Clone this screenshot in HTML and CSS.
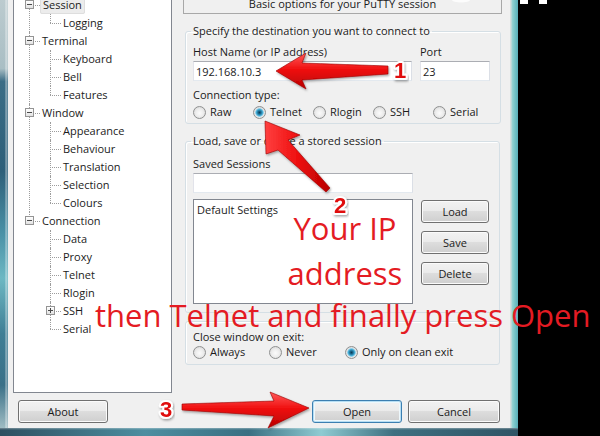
FILE: index.html
```html
<!DOCTYPE html>
<html lang="en">

<head>
  <meta charset="UTF-8">
  <meta name="viewport" content="width=device-width, initial-scale=1.0">
  <title>PuTTY Configuration</title>
  <link rel="stylesheet" href="styles.css">
</head>

<body>
  <div class="screen">
    <div class="frame-left"></div>

    <div class="window">
      <div class="main">
        <div class="tree">
          <ul class="nodes">
            <li><i class="box"></i><div class="row"><span class="sel">Session</span></div>
              <ul class="sub">
                <li><div class="row">Logging</div></li>
              </ul>
            </li>
            <li><i class="box"></i><div class="row">Terminal</div>
              <ul class="sub">
                <li><div class="row">Keyboard</div></li>
                <li><div class="row">Bell</div></li>
                <li><div class="row">Features</div></li>
              </ul>
            </li>
            <li><i class="box"></i><div class="row">Window</div>
              <ul class="sub">
                <li><div class="row">Appearance</div></li>
                <li><div class="row">Behaviour</div></li>
                <li><div class="row">Translation</div></li>
                <li><div class="row">Selection</div></li>
                <li><div class="row">Colours</div></li>
              </ul>
            </li>
            <li><i class="box"></i><div class="row">Connection</div>
              <ul class="sub">
                <li><div class="row">Data</div></li>
                <li><div class="row">Proxy</div></li>
                <li><div class="row">Telnet</div></li>
                <li><div class="row">Rlogin</div></li>
                <li><i class="box plus"></i><div class="row">SSH</div></li>
                <li><div class="row">Serial</div></li>
              </ul>
            </li>
          </ul>
        </div>

        <div class="panel">
          <div class="banner">Basic options for your PuTTY session</div>

          <fieldset class="group">
            <legend>Specify the destination you want to connect to</legend>
            <div class="fields">
              <label class="field host">Host Name (or IP address)
                <input class="input" type="text" value="192.168.10.3">
              </label>
              <label class="field port">Port
                <input class="input" type="text" value="23">
              </label>
            </div>
            <div class="caption">Connection type:</div>
            <div class="radios types">
              <span class="radio"><i class="dot"></i>Raw</span>
              <span class="radio"><i class="dot on"></i>Telnet</span>
              <span class="radio"><i class="dot"></i>Rlogin</span>
              <span class="radio"><i class="dot"></i>SSH</span>
              <span class="radio"><i class="dot"></i>Serial</span>
            </div>
          </fieldset>

          <fieldset class="group sessions">
            <legend>Load, save or delete a stored session</legend>
            <div class="caption first">Saved Sessions</div>
            <input class="input wide" type="text" value="">
            <div class="session-row">
              <div class="listbox">Default Settings</div>
              <div class="side">
                <button type="button" class="btn small">Load</button>
                <button type="button" class="btn small">Save</button>
                <button type="button" class="btn small">Delete</button>
              </div>
            </div>
          </fieldset>

          <fieldset class="group exit">
            <div class="caption">Close window on exit:</div>
            <div class="radios exits">
              <span class="radio"><i class="dot"></i>Always</span>
              <span class="radio"><i class="dot"></i>Never</span>
              <span class="radio"><i class="dot on"></i>Only on clean exit</span>
            </div>
          </fieldset>
        </div>
      </div>

      <div class="buttons">
        <button type="button" class="btn">About</button>
        <div class="actions">
          <button type="button" class="btn default">Open</button>
          <button type="button" class="btn cancel">Cancel</button>
        </div>
      </div>
    </div>

    <div class="frame-right"></div>
    <div class="void"></div>
    <div class="frame-bottom"></div>

    <!-- red tutorial marks drawn over the screenshot -->
    <div class="notes">
      <svg width="600" height="436" viewBox="0 0 600 436">
        <defs>
          <linearGradient id="redH" x1="0" y1="0" x2="0" y2="1">
            <stop offset="0" stop-color="#ff5a5a" />
            <stop offset="0.45" stop-color="#f01010" />
            <stop offset="1" stop-color="#b80000" />
          </linearGradient>
          <linearGradient id="redD" x1="0" y1="0" x2="1" y2="0">
            <stop offset="0" stop-color="#ff4040" />
            <stop offset="0.5" stop-color="#ee0f0f" />
            <stop offset="1" stop-color="#b80000" />
          </linearGradient>
          <filter id="shade" x="-20%" y="-20%" width="140%" height="140%">
            <feDropShadow dx="1" dy="1.5" stdDeviation="1" flood-color="#000" flood-opacity="0.35" />
          </filter>
        </defs>
        <rect x="520" y="0" width="8" height="4" fill="#fff" />
        <rect x="539" y="0" width="8" height="4" fill="#fff" />
        <ellipse cx="461" cy="0" rx="9" ry="2.5" fill="#fff" opacity="0.8" />

        <polygon class="arrow" fill="url(#redH)" filter="url(#shade)"
          points="276,71 306,53 302,63 388,66 388,74 302,80 306,89" />
        <polygon class="arrow" fill="url(#redD)" filter="url(#shade)"
          points="265,121 300,135 288,140 330,188 326,192 278,150 266,154" />
        <polygon class="arrow" fill="url(#redH)" filter="url(#shade)"
          points="309,408 270,392 274,401 182,404 182,410 274,416 268,428" />

        <text class="num" x="400" y="78">1</text>
        <text class="num" x="340" y="213">2</text>
        <text class="num" x="166" y="417">3</text>
      </svg>
      <div class="note ip">Your IP<br>address</div>
      <div class="note hint">then Telnet and finally press Open</div>
    </div>
  </div>
</body>

</html>
```

FILE: styles.css
```css
* {
  margin: 0;
  padding: 0;
  box-sizing: border-box;
}

body {
  width: 600px;
  height: 436px;
  overflow: hidden;
  background: #000;
  font-family: "Open Sans", "Liberation Sans", sans-serif;
  font-size: 11px;
  color: #1b1b1b;
}

.screen {
  position: relative;
  display: grid;
  grid-template-columns: 8px 502px 8px 82px;
  grid-template-rows: 428px 8px;
  width: 600px;
  height: 436px;
}

/* window chrome */
.frame-left {
  background:
    linear-gradient(90deg, transparent 5px, rgba(255, 255, 255, 0.55) 6px, rgba(255, 255, 255, 0.2) 7px),
    linear-gradient(#bccbcf 0, #a9bec4 16%, #3b6d86 19%, #2d5f79 40%, #4b93a8 55%, #6db8c3 65%, #3f7e95 78%, #3a7088 90%, #9fbcc3 100%);
}

.frame-right {
  background: linear-gradient(90deg, #d6dede 0, #d6dede 1px, #9ad4d3 2px, #74c3c6 5px, #5aaeb8 8px);
}

.void {
  grid-column: 4;
  grid-row: 1 / 3;
  background: #000;
}

.frame-bottom {
  grid-column: 1 / 4;
  background:
    linear-gradient(rgba(255, 255, 255, 0.35), rgba(255, 255, 255, 0) 2px),
    linear-gradient(90deg, #2d4f60, #4d8ea0 28%, #3a6f82 48%, #8fcbd2 62%, #3e6f80 76%, #2f5465);
}

.window {
  background: #f0f0f0;
  display: flex;
  flex-direction: column;
  overflow: hidden;
}

.main {
  display: flex;
  align-items: flex-start;
}

/* category tree */
.tree {
  width: 159px;
  height: 403px;
  margin: -10px 0 0 5px;
  background: #fff;
  border: 1px solid #828790;
  overflow: hidden;
}

.tree ul {
  list-style: none;
}

.nodes {
  margin: 5px 0 0 15px;
}

.nodes li {
  position: relative;
  padding-left: 13px;
}

.nodes li::before {
  content: "";
  position: absolute;
  left: 0;
  top: 0;
  bottom: 0;
  border-left: 1px dotted #9c9c9c;
}

.nodes li:last-child::before {
  bottom: auto;
  height: 9px;
}

.nodes li::after {
  content: "";
  position: absolute;
  left: 0;
  top: 9px;
  width: 11px;
  border-top: 1px dotted #9c9c9c;
}

.sub {
  margin-left: 8px;
}

.row {
  height: 18px;
  line-height: 18px;
  white-space: nowrap;
}

.sel {
  margin-left: -2px;
  padding: 1px 2px;
  background: #ececec;
  border: 1px solid #dedede;
  border-radius: 2px;
}

.box {
  position: absolute;
  z-index: 1;
  left: -4px;
  top: 4px;
  width: 9px;
  height: 9px;
  border: 1px solid #949494;
  background:
    linear-gradient(#4a4a4a, #4a4a4a) center / 5px 1px no-repeat,
    linear-gradient(#fff, #e2e2e2);
}

.box.plus {
  background:
    linear-gradient(#4a4a4a, #4a4a4a) center / 5px 1px no-repeat,
    linear-gradient(#4a4a4a, #4a4a4a) center / 1px 5px no-repeat,
    linear-gradient(#fff, #e2e2e2);
}

/* options panel */
.panel {
  width: 319px;
  margin-left: 11px;
}

.banner {
  height: 17px;
  margin-top: -3px;
  border: 1px solid #a8a8a8;
  border-top: 0;
  text-align: center;
  line-height: 14px;
}

.group {
  margin: 10px 2px 0;
  padding: 7px 7px 4px;
  border: 1px solid #d5dfe5;
  border-radius: 3px;
  box-shadow: inset 1px 1px 0 #fff;
}

.group legend {
  margin-left: -2px;
  padding: 0 2px;
  line-height: 14px;
}

.caption {
  line-height: 14px;
  margin-top: 7px;
}

.caption.first {
  margin-top: 1px;
}

.fields {
  display: flex;
  gap: 8px;
}

.field {
  display: flex;
  flex-direction: column;
  line-height: 14px;
}

.field.host {
  width: 219px;
}

.field.port {
  width: 70px;
}

.input {
  height: 20px;
  margin-top: 2px;
  padding: 0 2px;
  font: inherit;
  color: #1b1b1b;
  background: #fff;
  border: 1px solid;
  border-color: #abadb3 #dbdfe6 #e3e9ef #e2e3ea;
  outline: none;
}

.input.wide {
  display: block;
  width: 220px;
}

.radios {
  display: grid;
  margin-top: 3px;
  height: 14px;
  line-height: 14px;
}

.radios.types {
  grid-template-columns: repeat(5, 60px);
}

.radios.exits {
  margin-top: 1px;
  grid-template-columns: 76px 76px auto;
}

.radio {
  display: flex;
  align-items: center;
  gap: 4px;
  white-space: nowrap;
}

.dot {
  width: 13px;
  height: 13px;
  border-radius: 50%;
  border: 1px solid #8f9090;
  background: radial-gradient(circle at 50% 55%, #fbfbfb 0, #ededed 45%, #cfcfcf 100%);
}

.dot.on {
  background:
    radial-gradient(circle, #0b3a55 0, #1a6a8e 1.5px, #3fa6cf 3px, #8fd0ea 4px, rgba(255, 255, 255, 0) 4.6px),
    radial-gradient(circle at 50% 55%, #fbfbfb 0, #ededed 45%, #cfcfcf 100%);
}

.sessions {
  padding-top: 8px;
  padding-bottom: 8px;
}

.session-row {
  display: flex;
  margin-top: 6px;
}

.listbox {
  width: 220px;
  height: 105px;
  padding: 3px 3px 0;
  line-height: 14px;
  background: #fff;
  border: 1px solid #828790;
}

.side {
  display: flex;
  flex-direction: column;
  gap: 8px;
  margin: 1px 0 0 8px;
}

.exit {
  margin-top: 8px;
  padding-top: 8px;
  padding-bottom: 5px;
}

.exit .caption {
  margin-top: 0;
}

/* push buttons */
.btn {
  width: 90px;
  height: 23px;
  font: inherit;
  color: #1b1b1b;
  border: 1px solid #707070;
  border-radius: 3px;
  background: linear-gradient(#f2f2f2 0%, #ebebeb 45%, #dddddd 50%, #cfcfcf 100%);
  box-shadow: inset 0 0 0 1px #fbfbfb;
}

.btn.small {
  width: 68px;
}

.btn.default {
  border-color: #3c7fb1;
  box-shadow: inset 0 0 0 1px #b7def3, inset 0 0 0 2px #eef8fc;
}

.btn.cancel {
  width: 92px;
}

.buttons {
  display: flex;
  justify-content: space-between;
  margin-top: 7px;
  padding: 0 10px;
}

.actions {
  display: flex;
  gap: 6px;
}

/* annotations */
.notes {
  position: absolute;
  left: 0;
  top: 0;
  width: 600px;
  height: 436px;
  pointer-events: none;
}

.notes svg {
  position: absolute;
  left: 0;
  top: 0;
}

.arrow {
  stroke: #9a0000;
  stroke-width: 0.6;
  stroke-linejoin: round;
}

.num {
  font-family: "Liberation Sans", Arial, sans-serif;
  font-weight: bold;
  font-size: 22px;
  text-anchor: middle;
  fill: #e00c0c;
  stroke: #fff;
  stroke-width: 4px;
  stroke-linejoin: round;
  paint-order: stroke;
  filter: url(#shade);
}

.note {
  position: absolute;
  color: #e41b23;
  font-family: "Open Sans", sans-serif;
  font-size: 31px;
  white-space: nowrap;
}

.ip {
  left: 245px;
  top: 206px;
  width: 200px;
  line-height: 45px;
  text-align: center;
}

.hint {
  left: 95px;
  top: 300px;
  line-height: 31px;
}
```
